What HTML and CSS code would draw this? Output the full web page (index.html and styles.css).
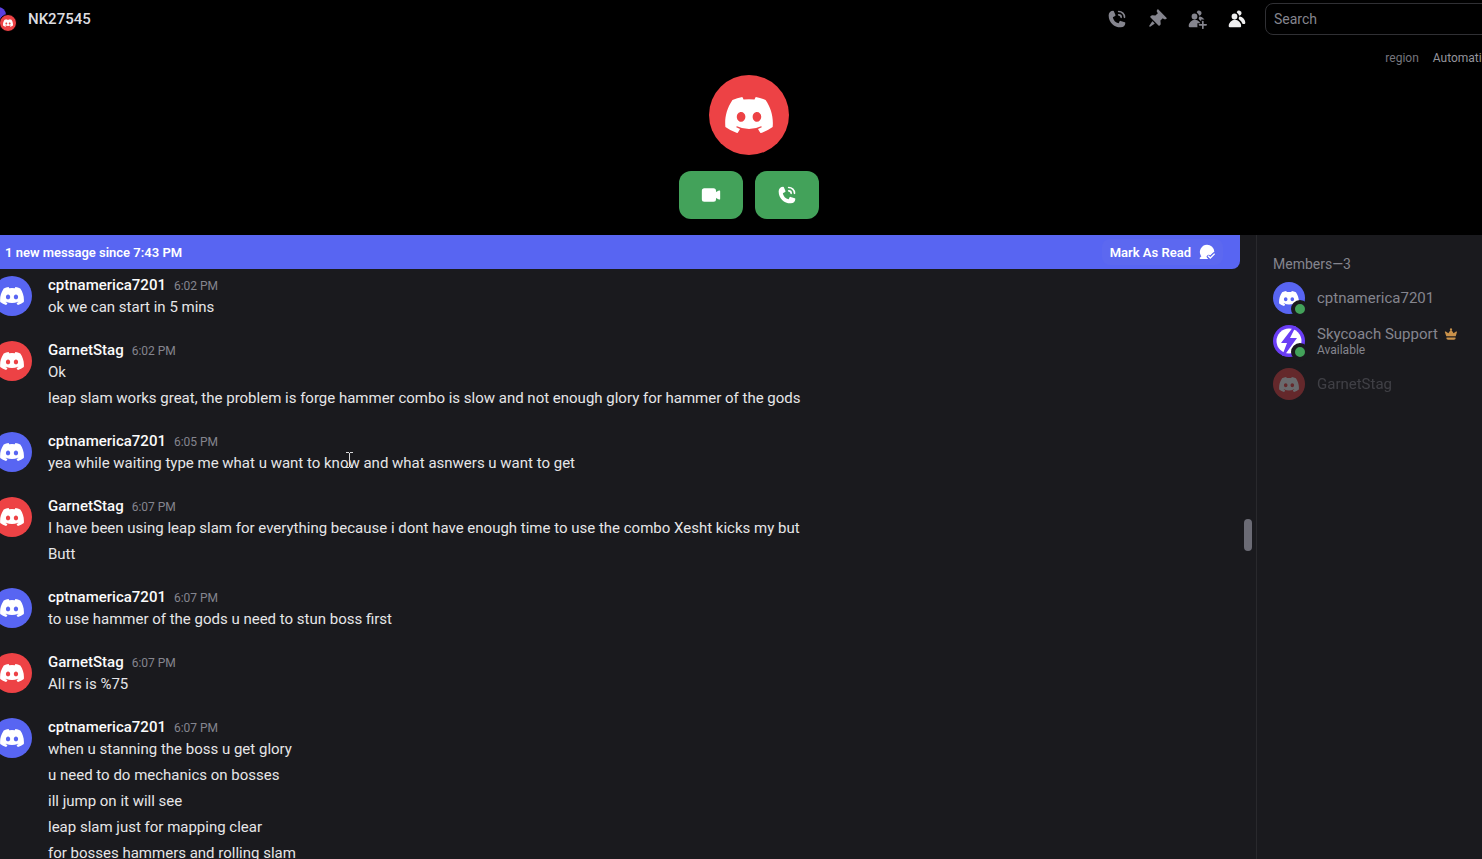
FILE: index.html
```html
<!DOCTYPE html>
<html lang="en">
<head>
  <meta charset="UTF-8">
  <title>NK27545</title>
  <link rel="stylesheet" href="styles.css">
</head>
<body>
  <!-- shared icons -->
  <svg class="sprite" aria-hidden="true">
    <symbol id="logo" viewBox="0 0 127 96">
      <path d="M107.7,8.07A105.15,105.15,0,0,0,81.47,0a72.06,72.06,0,0,0-3.36,6.83A97.68,97.68,0,0,0,49,6.83,72.37,72.37,0,0,0,45.64,0,105.89,105.89,0,0,0,19.39,8.09C2.79,32.65-1.71,56.6.54,80.21h0A105.73,105.73,0,0,0,32.71,96.36,77.7,77.7,0,0,0,39.6,85.25a68.42,68.42,0,0,1-10.85-5.18c.91-.66,1.8-1.34,2.66-2a75.57,75.57,0,0,0,64.32,0c.87.71,1.76,1.39,2.66,2a68.68,68.68,0,0,1-10.87,5.19,77,77,0,0,0,6.89,11.1A105.25,105.25,0,0,0,126.6,80.22h0C129.24,52.84,122.09,29.11,107.7,8.07ZM42.45,65.69C36.18,65.69,31,60,31,53s5-12.74,11.43-12.74S54,46,53.89,53,48.84,65.69,42.45,65.69Zm42.24,0C78.41,65.69,73.25,60,73.25,53s5-12.74,11.44-12.74S96.23,46,96.12,53,91.08,65.69,84.69,65.69Z"/>
    </symbol>
    <symbol id="phone" viewBox="0 0 24 24">
      <path d="M2 7.4A5.4 5.4 0 0 1 7.4 2c.36 0 .7.22.83.55l1.93 4.64a1 1 0 0 1-.43 1.25L7 10a8.52 8.52 0 0 0 7 7l1.12-2.24a1 1 0 0 1 1.19-.51l5.06 1.56c.38.11.63.46.63.85C22 19.6 19.6 22 16.66 22h-.37C8.39 22 2 15.6 2 7.71V7.4ZM13 3a1 1 0 0 1 1-1 8 8 0 0 1 8 8 1 1 0 1 1-2 0 6 6 0 0 0-6-6 1 1 0 0 1-1-1Z"/>
      <path d="M13 7a1 1 0 0 1 1-1 4 4 0 0 1 4 4 1 1 0 1 1-2 0 2 2 0 0 0-2-2 1 1 0 0 1-1-1Z"/>
    </symbol>
    <symbol id="people" viewBox="0 0 24 24">
      <path d="M14.5 8a3 3 0 1 0-2.7-4.3c-.2.4.06.86.44 1.12a5 5 0 0 1 2.14 3.08c.01.06.06.1.12.1ZM18.44 17.27c.15.43.54.73 1 .73h1.06c.83 0 1.5-.67 1.5-1.5a7.5 7.5 0 0 0-6.5-7.43c-.55-.08-.99.38-1.1.92-.06.3-.15.6-.26.87-.23.58-.05 1.3.47 1.63a9.53 9.53 0 0 1 3.83 4.78ZM12.5 9a3.5 3.5 0 1 1-7 0 3.5 3.5 0 0 1 7 0ZM2 20.5a7.5 7.5 0 0 1 15 0c0 .83-.67 1.5-1.5 1.5h-12A1.5 1.5 0 0 1 2 20.5Z"/>
    </symbol>
  </svg>

  <header class="topbar">
    <div class="group-icon">
      <span class="dot-purple"></span>
      <span class="dot-red"><svg><use href="#logo"/></svg></span>
    </div>
    <h1>NK27545</h1>
    <div class="tools">
      <button aria-label="Start voice call"><svg><use href="#phone"/></svg></button>
      <button aria-label="Pinned messages"><svg viewBox="0 0 24 24"><path d="M19.38 11.38a3 3 0 0 0 4.24 0l.03-.03a.5.5 0 0 0 0-.7L13.35.35a.5.5 0 0 0-.7 0l-.03.03a3 3 0 0 0 0 4.24L13 5l-2.92 2.92-3.65-.34a2 2 0 0 0-1.6.58l-.62.63a1 1 0 0 0 0 1.42l9.58 9.58a1 1 0 0 0 1.42 0l.63-.63a2 2 0 0 0 .58-1.6l-.34-3.64L19 11l.38.38ZM9.07 17.07a.5.5 0 0 1-.08.77l-5.15 3.43a.5.5 0 0 1-.63-.06l-.42-.42a.5.5 0 0 1-.06-.63L6.16 15a.5.5 0 0 1 .77-.08l2.14 2.14Z"/></svg></button>
      <button aria-label="Add friends"><svg viewBox="0 0 24 24">
        <mask id="plus-gap"><rect width="24" height="24" fill="#fff"/><path d="M12.5 17h4.5v-4.5h7v11.5h-7v-1.5h-4.5Z" fill="#000"/></mask>
        <g mask="url(#plus-gap)"><use href="#people"/></g>
        <path d="M19 14a1 1 0 0 1 1 1v3h3a1 1 0 0 1 0 2h-3v3a1 1 0 0 1-2 0v-3h-3a1 1 0 1 1 0-2h3v-3a1 1 0 0 1 1-1Z"/>
      </svg></button>
      <button class="active" aria-label="Member list"><svg><use href="#people"/></svg></button>
    </div>
    <input class="search" type="text" placeholder="Search" aria-label="Search">
  </header>

  <section class="call">
    <div class="region">
      <span>region</span>
      <button>Automatic</button>
    </div>
    <div class="avatar large red"><svg><use href="#logo"/></svg></div>
    <div class="call-buttons">
      <button aria-label="Join video"><svg viewBox="0 0 24 24"><path d="M4 4a3 3 0 0 0-3 3v10a3 3 0 0 0 3 3h11a3 3 0 0 0 3-3v-2.12a1 1 0 0 0 .55.9l3 1.5a1 1 0 0 0 1.45-.9V7.62a1 1 0 0 0-1.45-.9l-3 1.5a1 1 0 0 0-.55.9V7a3 3 0 0 0-3-3H4Z"/></svg></button>
      <button aria-label="Join call"><svg><use href="#phone"/></svg></button>
    </div>
  </section>

  <div class="content">
    <main class="chat">
      <div class="new-bar">
        <span>1 new message since 7:43 PM</span>
        <button>Mark As Read
          <svg viewBox="0 0 24 24"><path d="M12 1a11 11 0 0 1 11 10.5l-6.5 6.5-.8-.8a2.5 2.5 0 0 0-3.5 3.5L14 22.5H2a1 1 0 0 1-.7-1.7l2.2-2.3A11 11 0 0 1 12 1Z"/><path d="m13 17.500 3.500 3.500 7-7" fill="none" stroke="#5c68f0" stroke-width="5"/><path d="m13.500 17.500 3.500 3.500 6.500-6.500" fill="none" stroke="#fff" stroke-width="2"/></svg>
        </button>
      </div>

      <div class="messages">
        <article class="message">
          <div class="avatar blue"><svg><use href="#logo"/></svg></div>
          <div>
            <h2>cptnamerica7201 <time>6:02 PM</time></h2>
            <p>ok we can start in 5 mins</p>
          </div>
        </article>
        <article class="message">
          <div class="avatar red"><svg><use href="#logo"/></svg></div>
          <div>
            <h2>GarnetStag <time>6:02 PM</time></h2>
            <p>Ok</p>
            <p>leap slam works great, the problem is forge hammer combo is slow and not enough glory for hammer of the gods</p>
          </div>
        </article>
        <article class="message">
          <div class="avatar blue"><svg><use href="#logo"/></svg></div>
          <div>
            <h2>cptnamerica7201 <time>6:05 PM</time></h2>
            <p>yea while waiting type me what u want to know and what asnwers u want to get</p>
          </div>
        </article>
        <article class="message">
          <div class="avatar red"><svg><use href="#logo"/></svg></div>
          <div>
            <h2>GarnetStag <time>6:07 PM</time></h2>
            <p>I have been using leap slam for everything because i dont have enough time to use the combo Xesht kicks my but</p>
            <p>Butt</p>
          </div>
        </article>
        <article class="message">
          <div class="avatar blue"><svg><use href="#logo"/></svg></div>
          <div>
            <h2>cptnamerica7201 <time>6:07 PM</time></h2>
            <p>to use hammer of the gods u need to stun boss first</p>
          </div>
        </article>
        <article class="message">
          <div class="avatar red"><svg><use href="#logo"/></svg></div>
          <div>
            <h2>GarnetStag <time>6:07 PM</time></h2>
            <p>All rs is %75</p>
          </div>
        </article>
        <article class="message">
          <div class="avatar blue"><svg><use href="#logo"/></svg></div>
          <div>
            <h2>cptnamerica7201 <time>6:07 PM</time></h2>
            <p>when u stanning the boss u get glory</p>
            <p>u need to do mechanics on bosses</p>
            <p>ill jump on it will see</p>
            <p>leap slam just for mapping clear</p>
            <p>for bosses hammers and rolling slam</p>
          </div>
        </article>
      </div>
      <div class="scroll-thumb"></div>
      <svg class="cursor" viewBox="0 0 7 16"><path d="M0 .5h3M4 .5h3M3.5 1v14M0 15.5h3M4 15.5h3"/></svg>
    </main>

    <aside class="members">
      <h2>Members—3</h2>
      <ul>
        <li>
          <div class="avatar small blue"><svg><use href="#logo"/></svg><i class="status"></i></div>
          <div class="member-name"><span>cptnamerica7201</span></div>
        </li>
        <li>
          <div class="avatar small purple">
            <svg class="bolt" viewBox="0 0 32 32"><circle cx="16" cy="16" r="12.5"/><path d="M21 1 8 18h6l-5 13h2l13-18h-7l6-12Z"/></svg>
            <i class="status"></i>
          </div>
          <div class="member-name">
            <span>Skycoach Support <svg class="crown" viewBox="0 0 24 24"><path d="M5 18a1 1 0 0 0-1 1 3 3 0 0 0 3 3h10a3 3 0 0 0 3-3 1 1 0 0 0-1-1H5ZM3.04 7.76a1 1 0 0 0-1.52 1.15l2.25 6.42a1 1 0 0 0 .94.67h14.55a1 1 0 0 0 .95-.71l1.94-6.45a1 1 0 0 0-1.55-1.1l-4.11 3-3.55-5.33.82-.82a.83.83 0 0 0 0-1.18l-1.17-1.17a.83.83 0 0 0-1.18 0l-1.17 1.17a.83.83 0 0 0 0 1.18l.82.82-3.61 5.42-4.41-3.07Z"/></svg></span>
            <small>Available</small>
          </div>
        </li>
        <li class="offline">
          <div class="avatar small red"><svg><use href="#logo"/></svg></div>
          <div class="member-name"><span>GarnetStag</span></div>
        </li>
      </ul>
    </aside>
  </div>
</body>
</html>
```

FILE: styles.css
```css
* {
  box-sizing: border-box;
}

body {
  margin: 0;
  height: 100vh;
  display: flex;
  flex-direction: column;
  overflow: hidden;
  background-color: #000;
  color: #e6e6e8;
  font-family: Roboto, "Noto Sans", sans-serif;
  font-size: 15px;
}

h1, h2, p, ul {
  margin: 0;
  padding: 0;
}

button {
  border: none;
  padding: 0;
  background: none;
  color: inherit;
  font-family: inherit;
  cursor: pointer;
}

svg {
  display: block;
  fill: currentColor;
}

.sprite {
  position: absolute;
  width: 0;
  height: 0;
}

/* top bar */
.topbar {
  display: flex;
  align-items: center;
  height: 38px;
  overflow: hidden;
}

.group-icon {
  position: relative;
  width: 28px;
  height: 38px;
}

.dot-purple {
  position: absolute;
  left: -10px;
  top: 7px;
  width: 16px;
  height: 16px;
  border-radius: 50%;
  background-color: #5b3fe0;
}

.dot-red {
  position: absolute;
  left: -1px;
  top: 14px;
  width: 18px;
  height: 18px;
  display: flex;
  align-items: center;
  justify-content: center;
  border: 1px solid #000;
  border-radius: 50%;
  background-color: #ed4245;
  color: #fff;
}

.dot-red svg {
  width: 10px;
  height: 8px;
}

.topbar h1 {
  flex: 1;
  font-size: 15px;
  font-weight: 500;
  line-height: 20px;
  color: #dedee0;
}

.tools {
  display: flex;
  gap: 20px;
  margin-right: 18px;
  color: #85858e;
}

.tools svg {
  width: 20px;
  height: 20px;
}

.tools .active {
  color: #efeff0;
}

.search {
  width: 244px;
  height: 32px;
  margin-right: -27px;
  padding: 0 8px;
  border: 1px solid #303034;
  border-radius: 8px;
  background-color: #000;
  color: #efeff0;
  font-family: inherit;
  font-size: 14px;
}

.search::placeholder {
  color: #85858e;
}

/* call */
.call {
  position: relative;
  display: flex;
  flex-direction: column;
  align-items: center;
  gap: 16px;
  height: 197px;
  padding: 37px 0 0 16px;
  overflow: hidden;
}

.region {
  position: absolute;
  top: 12px;
  right: -6px;
  display: flex;
  gap: 14px;
  font-size: 12px;
  line-height: 16px;
  color: #75757d;
}

.region button {
  font-size: 12px;
  line-height: 16px;
  color: #94949c;
}

.call-buttons {
  display: flex;
  gap: 12px;
}

.call-buttons button {
  display: flex;
  align-items: center;
  justify-content: center;
  width: 64px;
  height: 48px;
  border-radius: 12px;
  background-color: #43a25a;
  color: #fff;
}

.call-buttons svg {
  width: 20px;
  height: 20px;
}

/* avatars */
.avatar {
  position: relative;
  flex: none;
  display: flex;
  align-items: center;
  justify-content: center;
  width: 40px;
  height: 40px;
  border-radius: 50%;
  color: #fff;
}

.avatar svg {
  width: 24px;
  height: 18px;
}

.avatar.large {
  width: 80px;
  height: 80px;
}

.avatar.large svg {
  width: 48px;
  height: 36px;
}

.avatar.small {
  width: 32px;
  height: 32px;
}

.avatar.small svg {
  width: 20px;
  height: 15px;
}

.blue {
  background-color: #5865f2;
}

.red {
  background-color: #ed4245;
}

.purple {
  background-color: #6a3df5;
}

.avatar.small .bolt {
  width: 32px;
  height: 32px;
}

.bolt path {
  fill: #6a3df5;
}

.status {
  position: absolute;
  right: -4px;
  bottom: -4px;
  width: 18px;
  height: 18px;
  border: 4px solid #1a1a1e;
  border-radius: 50%;
  background-color: #43a25a;
}

/* chat */
.content {
  flex: 1;
  display: flex;
  min-height: 0;
  background-color: #1a1a1e;
}

.chat {
  position: relative;
  flex: 1;
  overflow: hidden;
}

.new-bar {
  display: flex;
  align-items: center;
  justify-content: space-between;
  height: 34px;
  margin-right: 16px;
  padding: 0 17px 0 5px;
  border-bottom-right-radius: 8px;
  background-color: #5865f2;
  color: #fff;
  font-size: 13px;
  font-weight: 600;
}

.new-bar button {
  display: flex;
  align-items: center;
  gap: 8px;
  height: 26px;
  padding: 0 8px;
  border-radius: 8px;
  background-color: #5c68f0;
  font-size: 13px;
  font-weight: 600;
}

.new-bar svg {
  width: 16px;
  height: 16px;
}

.messages {
  display: flex;
  flex-direction: column;
  gap: 21px;
  padding-top: 5px;
}

.message {
  display: flex;
  gap: 16px;
  margin-left: -8px;
}

.message .avatar {
  margin-top: 2px;
}

.message h2 {
  display: flex;
  align-items: baseline;
  gap: 8px;
  height: 22px;
  font-size: 15px;
  font-weight: 500;
  line-height: 22px;
  color: #fbfbfb;
}

.message time {
  font-size: 12px;
  font-weight: 400;
  line-height: 16px;
  color: #85858e;
}

.message p {
  line-height: 22px;
}

.message p + p {
  margin-top: 4px;
}

.scroll-thumb {
  position: absolute;
  top: 284px;
  right: 4px;
  width: 8px;
  height: 32px;
  border-radius: 4px;
  background-color: #6b6b75;
}

.cursor {
  position: absolute;
  left: 346px;
  top: 217px;
  width: 7px;
  height: 16px;
  stroke: #d8d8da;
}

/* members */
.members {
  width: 226px;
  padding: 20px 0 0 16px;
  border-left: 1px solid #29292d;
  color: #85858e;
}

.members h2 {
  font-size: 14px;
  font-weight: 400;
  line-height: 18px;
}

.members ul {
  display: flex;
  flex-direction: column;
  gap: 11px;
  margin-top: 9px;
  list-style: none;
}

.members li {
  display: flex;
  align-items: center;
  gap: 12px;
  height: 32px;
}

.member-name span {
  display: flex;
  align-items: center;
  gap: 6px;
  line-height: 18px;
}

.member-name small {
  display: block;
  font-size: 12px;
  line-height: 14px;
}

.crown {
  width: 14px;
  height: 14px;
  color: #c9914a;
}

.offline {
  opacity: 0.35;
}
```
